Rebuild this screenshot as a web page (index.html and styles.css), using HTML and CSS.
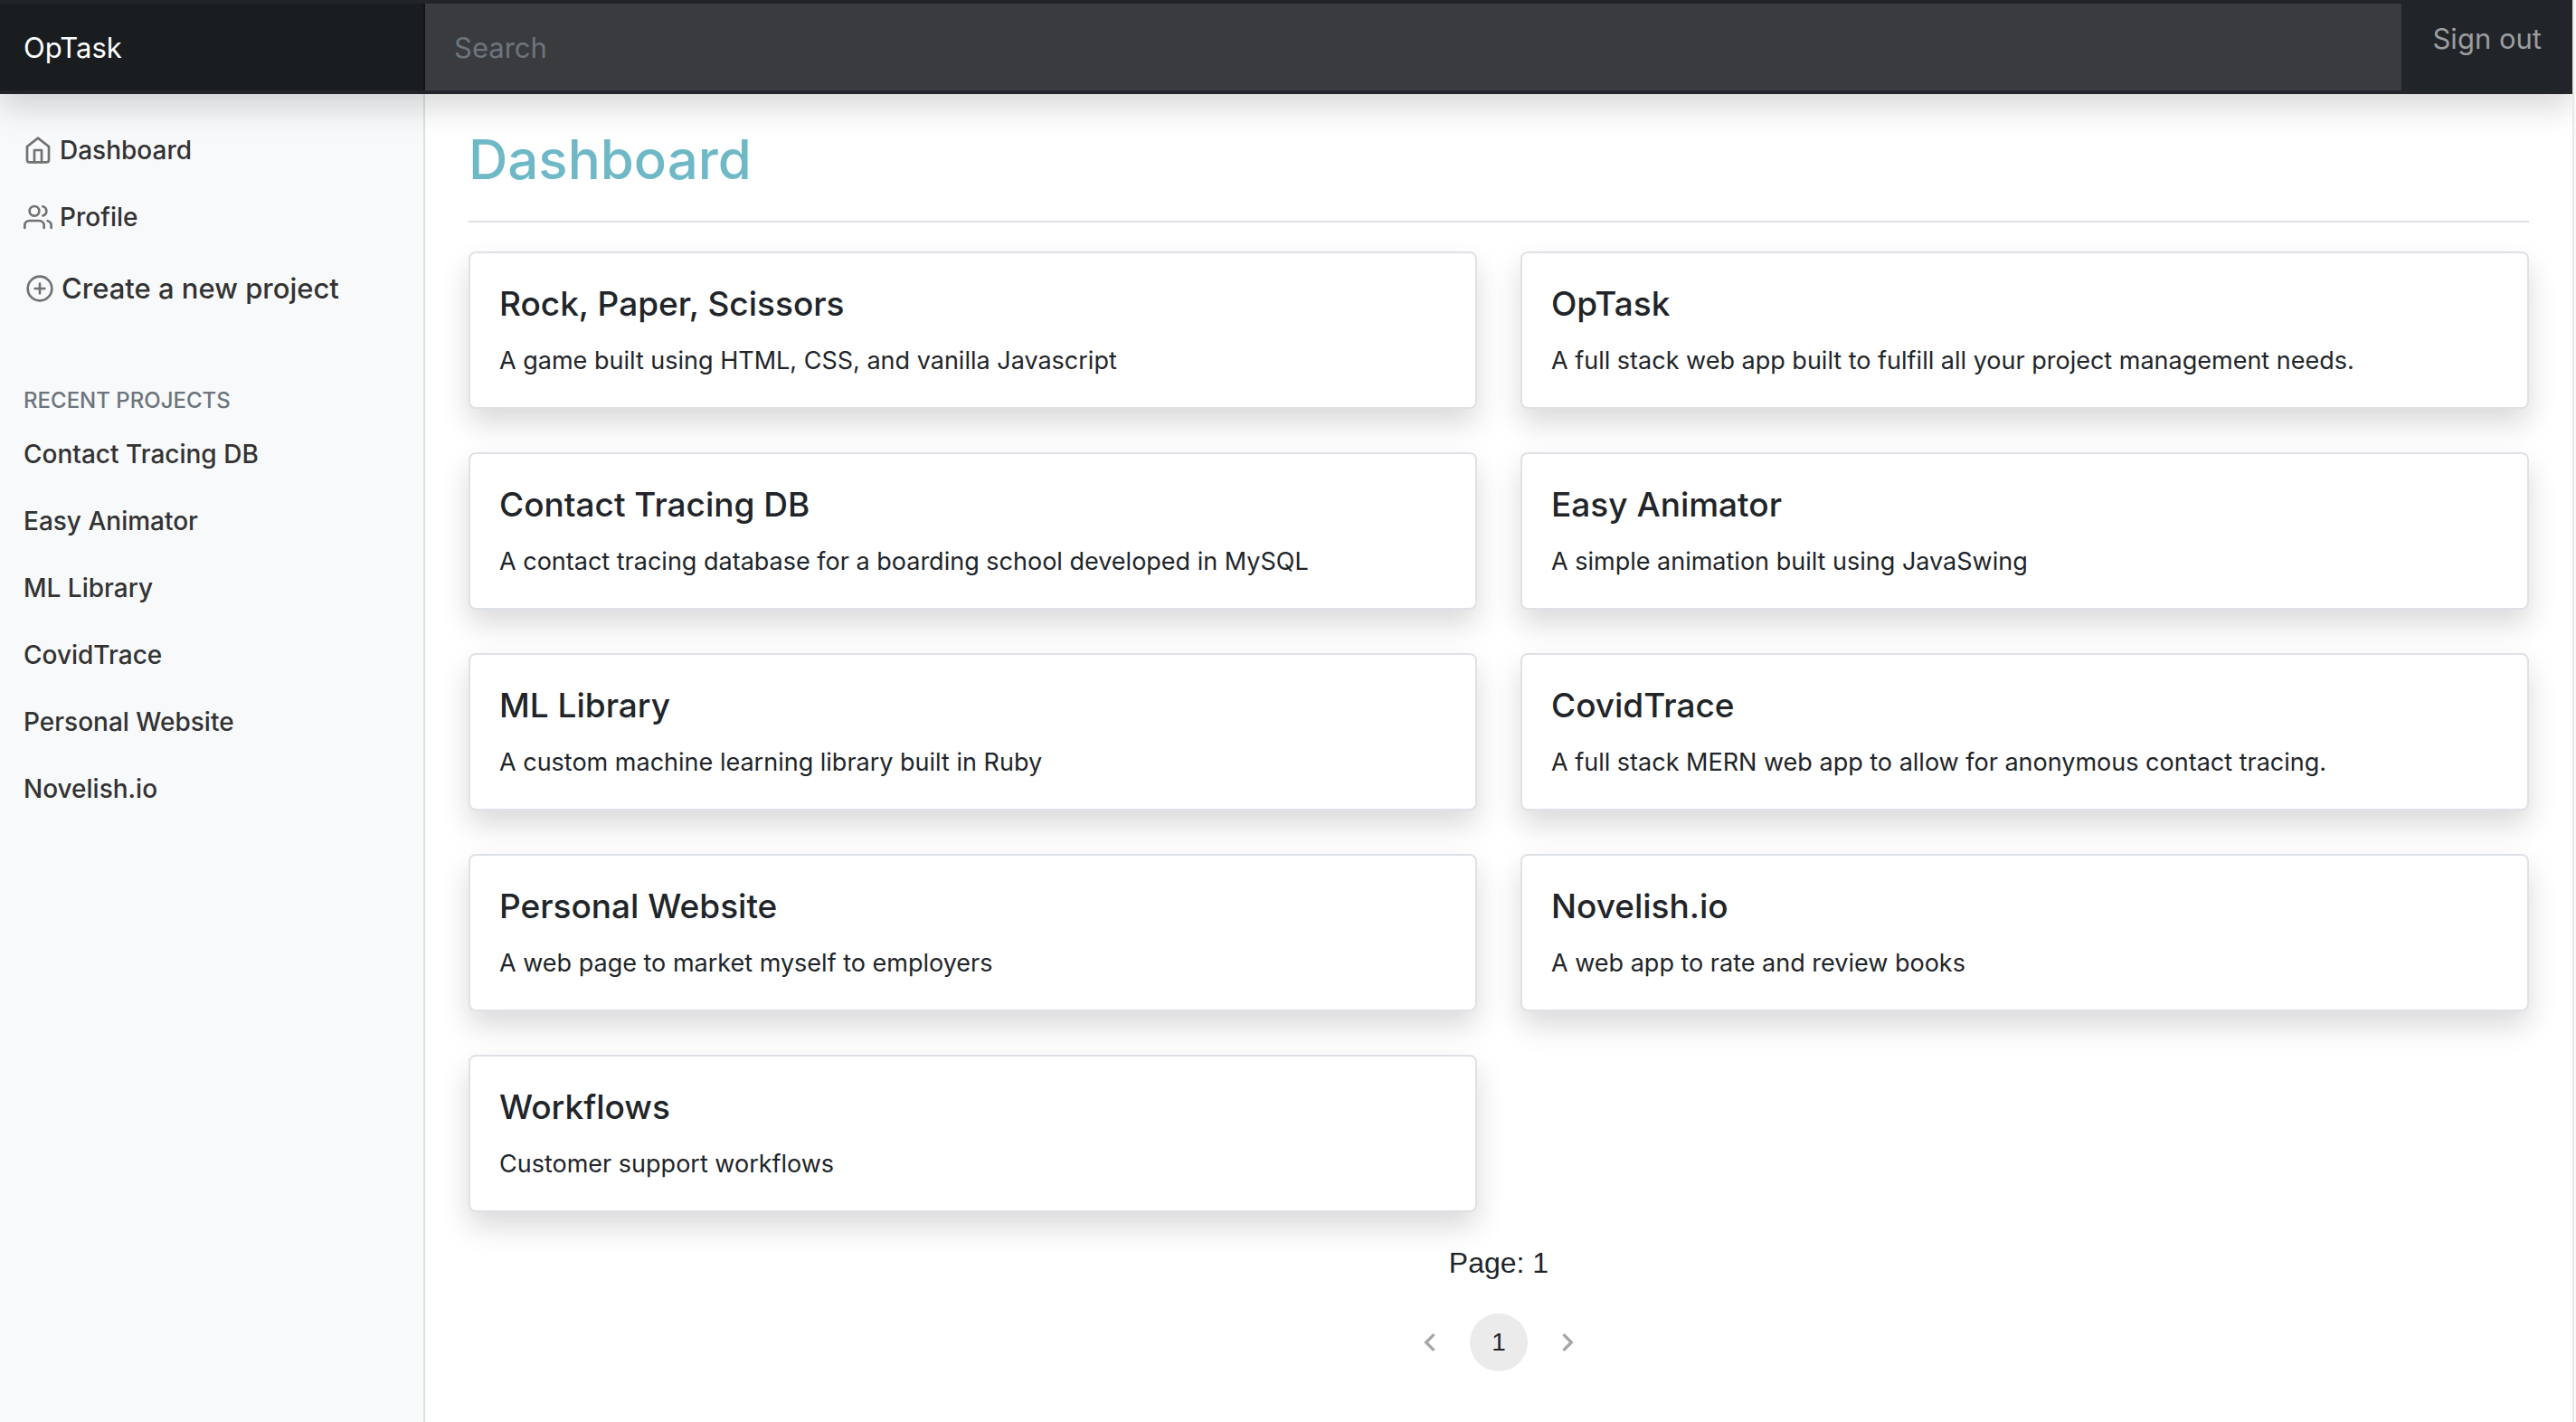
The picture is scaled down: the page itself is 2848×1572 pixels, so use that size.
FILE: index.html
```html
<!DOCTYPE html>
<html lang="en">
<head>
<meta charset="utf-8">
<meta name="viewport" content="width=device-width, initial-scale=1">
<title>OpTask</title>
<link rel="stylesheet" href="styles.css">
</head>
<body>
<header class="navbar">
  <a class="brand" href="#">OpTask</a>
  <input class="search" type="search" placeholder="Search" aria-label="Search">
  <a class="sign-out" href="#">Sign out</a>
</header>
<div class="layout">
  <nav class="sidebar" aria-label="Main">
    <ul class="nav">
      <li><a class="nav-link" href="#"><svg class="icon" viewBox="0 0 24 24" aria-hidden="true"><path d="M3 9l9-7 9 7v11a2 2 0 0 1-2 2H5a2 2 0 0 1-2-2z"/><path d="M9 22V12h6v10"/></svg>Dashboard</a></li>
      <li><a class="nav-link" href="#"><svg class="icon" viewBox="0 0 24 24" aria-hidden="true"><path d="M17 21v-2a4 4 0 0 0-4-4H5a4 4 0 0 0-4 4v2"/><circle cx="9" cy="7" r="4"/><path d="M23 21v-2a4 4 0 0 0-3-3.87"/><path d="M16 3.13a4 4 0 0 1 0 7.75"/></svg>Profile</a></li>
    </ul>
    <button class="create" type="button"><svg class="icon" viewBox="0 0 24 24" aria-hidden="true"><circle cx="12" cy="12" r="10"/><path d="M12 8v8M8 12h8"/></svg>Create a new project</button>
    <h2 class="nav-heading">Recent projects</h2>
    <ul class="nav">
      <li><a class="nav-link" href="#">Contact Tracing DB</a></li>
      <li><a class="nav-link" href="#">Easy Animator</a></li>
      <li><a class="nav-link" href="#">ML Library</a></li>
      <li><a class="nav-link" href="#">CovidTrace</a></li>
      <li><a class="nav-link" href="#">Personal Website</a></li>
      <li><a class="nav-link" href="#">Novelish.io</a></li>
    </ul>
  </nav>
  <main class="main">
    <h1 class="title">Dashboard</h1>
    <div class="cards">
      <article class="card"><h2 class="card-title">Rock, Paper, Scissors</h2><p class="card-text">A game built using HTML, CSS, and vanilla Javascript</p></article>
      <article class="card"><h2 class="card-title">OpTask</h2><p class="card-text">A full stack web app built to fulfill all your project management needs.</p></article>
      <article class="card"><h2 class="card-title">Contact Tracing DB</h2><p class="card-text">A contact tracing database for a boarding school developed in MySQL</p></article>
      <article class="card"><h2 class="card-title">Easy Animator</h2><p class="card-text">A simple animation built using JavaSwing</p></article>
      <article class="card"><h2 class="card-title">ML Library</h2><p class="card-text">A custom machine learning library built in Ruby</p></article>
      <article class="card"><h2 class="card-title">CovidTrace</h2><p class="card-text">A full stack MERN web app to allow for anonymous contact tracing.</p></article>
      <article class="card"><h2 class="card-title">Personal Website</h2><p class="card-text">A web page to market myself to employers</p></article>
      <article class="card"><h2 class="card-title">Novelish.io</h2><p class="card-text">A web app to rate and review books</p></article>
      <article class="card"><h2 class="card-title">Workflows</h2><p class="card-text">Customer support workflows</p></article>
    </div>
    <p class="page-label">Page: 1</p>
    <nav class="pagination" aria-label="Pagination">
      <button class="page-button" type="button" aria-label="Previous page" disabled><svg class="chevron" viewBox="0 0 24 24" aria-hidden="true"><path d="M15.41 7.41L14 6l-6 6 6 6 1.41-1.41L10.83 12z"/></svg></button>
      <button class="page-button current" type="button" aria-current="page">1</button>
      <button class="page-button" type="button" aria-label="Next page" disabled><svg class="chevron" viewBox="0 0 24 24" aria-hidden="true"><path d="M10 6L8.59 7.41 13.17 12l-4.58 4.59L10 18l6-6z"/></svg></button>
    </nav>
  </main>
</div>
</body>
</html>
```
FILE: styles.css
```css
* { box-sizing: border-box; }

html {
  padding-right: 2px;
  background: #fafafa;
}

body {
  margin: 0;
  min-height: 100vh;
  display: flex;
  flex-direction: column;
  border-right: 2px solid #e8e8e8;
  background: #fff;
  color: #212529;
  font: 27px/42px Inter, "Liberation Sans", sans-serif;
}

a { color: inherit; text-decoration: none; }
button { border: 0; padding: 0; background: none; color: inherit; font: inherit; }

.navbar {
  position: relative;
  z-index: 1;
  display: flex;
  padding: 4px 0;
  background: #212529;
  box-shadow: 0 16px 32px rgba(0, 0, 0, .15);
  font-size: 31px;
  line-height: 48px;
}

.brand {
  flex: 0 0 470px;
  padding: 25px 26px 23px;
  background: #191d20;
  box-shadow: inset -2px 0 0 rgba(0, 0, 0, .25);
  color: #fff;
}

.search {
  flex: 1;
  min-width: 0;
  border: 0;
  padding: 25px 32px 23px;
  background: #3a3b3e;
  color: #fff;
  font: inherit;
}

.search::placeholder { color: #6c757d; opacity: 1; }
.sign-out { padding: 15px 34px; color: #9b9d9f; }

.layout { flex: 1; display: flex; }

.sidebar {
  flex: 0 0 470px;
  padding-top: 25px;
  background: #f8f9fb;
  border-right: 2px solid #dfe0e1;
  color: #333;
  font-size: 28px;
  font-weight: 500;
}

.nav { margin: 0; padding: 0; list-style: none; }
.nav-link { display: flex; align-items: center; padding: 16px 26px; }

.icon {
  width: 32px;
  height: 32px;
  margin-right: 8px;
  fill: none;
  stroke: #727272;
  stroke-width: 2;
  stroke-linecap: round;
  stroke-linejoin: round;
}

.create { display: flex; align-items: center; padding: 18px 28px; font-size: 31px; line-height: 48px; }

.nav-heading {
  margin: 66px 0 6px;
  padding: 0 26px;
  color: #6c757d;
  font-size: 24px;
  font-weight: 500;
  line-height: 32px;
  text-transform: uppercase;
}

.main { flex: 1; min-width: 0; padding: 32px 48px; }

.title {
  margin: 0 0 32px;
  padding-bottom: 28px;
  border-bottom: 2px solid #dee2e6;
  color: #6fb9c7;
  font-size: 60px;
  font-weight: 500;
  line-height: 80px;
}

.cards { display: grid; grid-template-columns: 1fr 1fr; gap: 48px; }

.card {
  padding: 32px 32px 30px;
  border: 2px solid #dee2e6;
  border-radius: 8px;
  background: #fff;
  box-shadow: 0 16px 32px rgba(0, 0, 0, .15);
}

.card-title { margin: 0 0 18px; font-size: 37px; font-weight: 500; line-height: 48px; }
.card-text { margin: 0; }

.page-label { margin: 32px 0; font: 32px/48px "Liberation Sans", sans-serif; text-align: center; }
.pagination { display: flex; justify-content: center; gap: 12px; }

.page-button {
  display: flex;
  align-items: center;
  justify-content: center;
  width: 64px;
  height: 64px;
  border-radius: 50%;
  font: 28px/40px "Liberation Sans", sans-serif;
}

.current { background: #ebebeb; }
.chevron { width: 40px; height: 40px; fill: #a6a6a6; }
```
